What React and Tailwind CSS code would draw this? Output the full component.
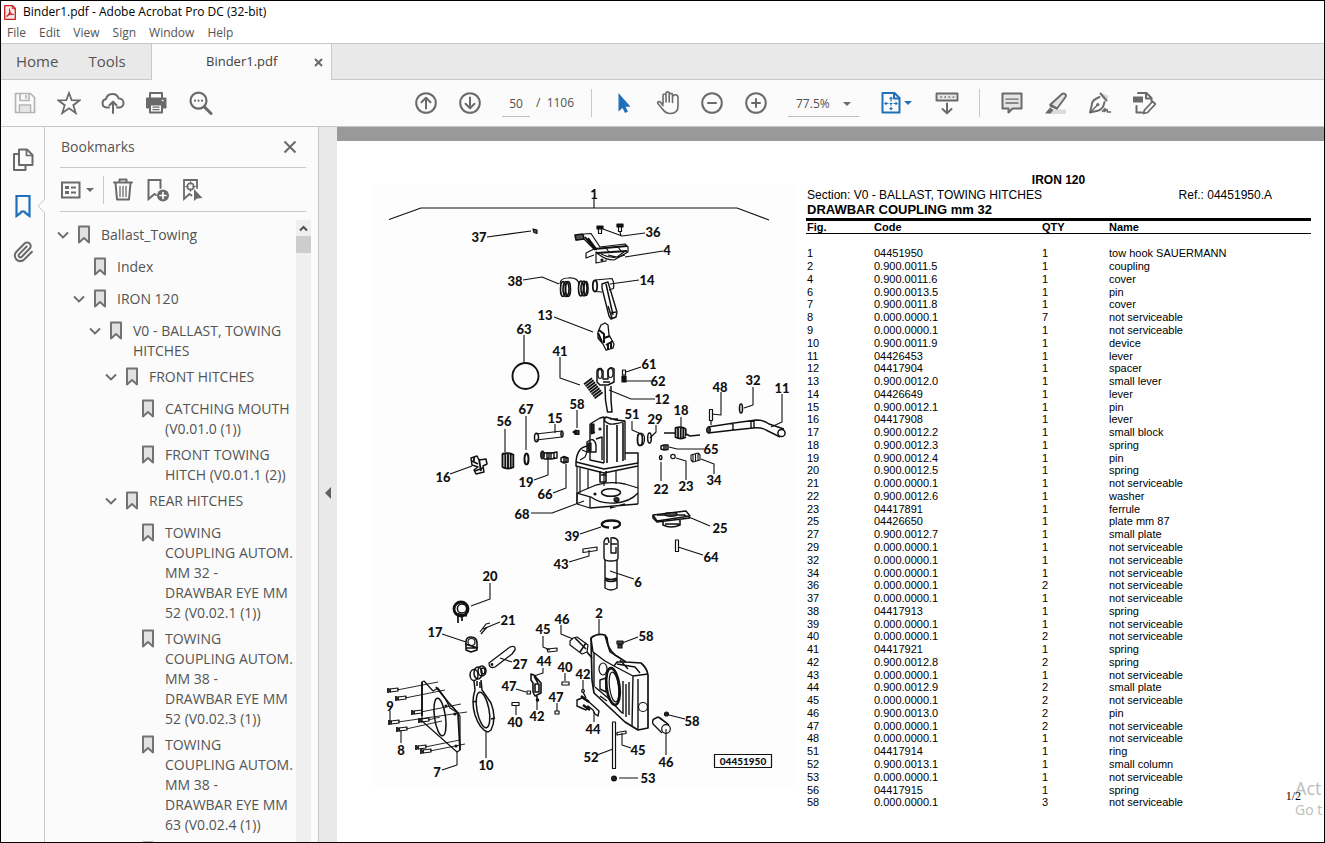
import React, { useState } from 'react';

const bookmarks = [
    { level: 0, open: true, text: 'Ballast_Towing' },
    { level: 1, text: 'Index' },
    { level: 1, open: true, text: 'IRON 120' },
    { level: 2, open: true, text: 'V0 - BALLAST, TOWING\nHITCHES' },
    { level: 3, open: true, text: 'FRONT HITCHES' },
    { level: 4, text: 'CATCHING MOUTH\n(V0.01.0 (1))' },
    { level: 4, text: 'FRONT TOWING\nHITCH (V0.01.1 (2))' },
    { level: 3, open: true, text: 'REAR HITCHES' },
    { level: 4, text: 'TOWING\nCOUPLING AUTOM.\nMM 32 -\nDRAWBAR EYE MM\n52 (V0.02.1 (1))' },
    { level: 4, text: 'TOWING\nCOUPLING AUTOM.\nMM 38 -\nDRAWBAR EYE MM\n52 (V0.02.3 (1))' },
    { level: 4, text: 'TOWING\nCOUPLING AUTOM.\nMM 38 -\nDRAWBAR EYE MM\n63 (V0.02.4 (1))' },
    { level: 4, text: '' },
];

const indent = ['pl-3', 'pl-7', 'pl-11', 'pl-15', 'pl-19'];

const parts = [
    ['1', '04451950', '1', 'tow hook SAUERMANN'],
    ['2', '0.900.0011.5', '1', 'coupling'],
    ['4', '0.900.0011.6', '1', 'cover'],
    ['6', '0.900.0013.5', '1', 'pin'],
    ['7', '0.900.0011.8', '1', 'cover'],
    ['8', '0.000.0000.1', '7', 'not serviceable'],
    ['9', '0.000.0000.1', '1', 'not serviceable'],
    ['10', '0.900.0011.9', '1', 'device'],
    ['11', '04426453', '1', 'lever'],
    ['12', '04417904', '1', 'spacer'],
    ['13', '0.900.0012.0', '1', 'small lever'],
    ['14', '04426649', '1', 'lever'],
    ['15', '0.900.0012.1', '1', 'pin'],
    ['16', '04417908', '1', 'lever'],
    ['17', '0.900.0012.2', '1', 'small block'],
    ['18', '0.900.0012.3', '1', 'spring'],
    ['19', '0.900.0012.4', '1', 'pin'],
    ['20', '0.900.0012.5', '1', 'spring'],
    ['21', '0.000.0000.1', '1', 'not serviceable'],
    ['22', '0.900.0012.6', '1', 'washer'],
    ['23', '04417891', '1', 'ferrule'],
    ['25', '04426650', '1', 'plate mm 87'],
    ['27', '0.900.0012.7', '1', 'small plate'],
    ['29', '0.000.0000.1', '1', 'not serviceable'],
    ['32', '0.000.0000.1', '1', 'not serviceable'],
    ['34', '0.000.0000.1', '1', 'not serviceable'],
    ['36', '0.000.0000.1', '2', 'not serviceable'],
    ['37', '0.000.0000.1', '1', 'not serviceable'],
    ['38', '04417913', '1', 'spring'],
    ['39', '0.000.0000.1', '1', 'not serviceable'],
    ['40', '0.000.0000.1', '2', 'not serviceable'],
    ['41', '04417921', '1', 'spring'],
    ['42', '0.900.0012.8', '2', 'spring'],
    ['43', '0.000.0000.1', '1', 'not serviceable'],
    ['44', '0.900.0012.9', '2', 'small plate'],
    ['45', '0.000.0000.1', '2', 'not serviceable'],
    ['46', '0.900.0013.0', '2', 'pin'],
    ['47', '0.000.0000.1', '2', 'not serviceable'],
    ['48', '0.000.0000.1', '1', 'not serviceable'],
    ['51', '04417914', '1', 'ring'],
    ['52', '0.900.0013.1', '1', 'small column'],
    ['53', '0.000.0000.1', '1', 'not serviceable'],
    ['56', '04417915', '1', 'spring'],
    ['58', '0.000.0000.1', '3', 'not serviceable'],
];

// callout number, x, y
const callouts = [
    ['1', 594, 194], ['37', 479, 237], ['36', 653, 232], ['4', 667, 250], ['38', 515, 281],
    ['14', 647, 280], ['13', 545, 315], ['63', 524, 329], ['41', 560, 351], ['61', 649, 364],
    ['62', 658, 381], ['12', 662, 399], ['48', 720, 387], ['32', 753, 380], ['11', 782, 388],
    ['58', 577, 404], ['67', 526, 409], ['56', 504, 421], ['15', 555, 418], ['51', 632, 414],
    ['29', 655, 419], ['18', 681, 410], ['65', 711, 449], ['34', 714, 480], ['23', 686, 486],
    ['22', 661, 489], ['66', 545, 494], ['19', 526, 482], ['16', 443, 477], ['68', 522, 514],
    ['39', 572, 536], ['25', 720, 528], ['43', 561, 564], ['64', 711, 557], ['6', 638, 582],
    ['20', 490, 576], ['21', 508, 620], ['17', 435, 632], ['46', 562, 619], ['45', 543, 629],
    ['2', 599, 613], ['58', 646, 636], ['27', 520, 664], ['44', 544, 661], ['40', 565, 667],
    ['42', 583, 674], ['47', 509, 686], ['47', 556, 697], ['42', 537, 716], ['40', 515, 722],
    ['44', 593, 729], ['9', 390, 706], ['8', 401, 750], ['7', 437, 772], ['10', 486, 765],
    ['52', 591, 757], ['45', 638, 750], ['58', 692, 721], ['46', 666, 762], ['53', 648, 778],
];

const leaders = [
    'M389 219.5L421 208H737L769 220M594 199V208M487 237L531 231M645 233L622 236L603 229M620 232L621 236',
    'M663 251L625 257M523 280L542 277L559 284M639 280L610 284M554 317L593 332M524 335V362',
    'M560 357V378L580 385M641 367L626 372M651 381H626M655 399H631L609 390M721 392V415L712 414',
    'M753 387V405L744 408M782 394V422L771 427M577 410V428M526 416V450M505 429V452M555 424V433',
    'M632 421V430L639 433M656 425V432L650 438M681 417V428M704 449H677L669 447M714 474V464L701 459',
    'M686 480V461L676 458M661 481V462M553 493L566 488V464M534 480L548 475V457M450 474L472 466',
    'M531 513H552L584 501M580 534L601 527M710 526L684 515M569 562L589 556V550M703 555L678 547',
    'M634 579L610 571M490 583V599L471 606M500 622L483 629M442 634L466 642M561 625V634L573 639',
    'M543 636V647L550 650M599 619V635M638 637L622 643M512 662L500 658M543 668V673L534 676M565 673V681',
    'M583 680V690M516 689L526 692M557 703V711M537 710V700M516 715V706M594 722V712M390 711V722',
    'M401 743V730M442 770L457 765V751M486 758V731M597 755L613 749M631 748L622 745V733',
    'M685 719L669 715M666 755V729M638 778H619',
].join('');

// bolts of the cover plate: head x, head y, end of the centre line
const bolts = [
    [388, 690, 438, 682], [396, 698, 445, 690], [412, 712, 461, 704], [389, 722, 467, 712],
    [419, 720, 440, 717], [397, 729, 442, 721], [416, 747, 460, 740], [421, 751, 465, 744],
];

const Icon = ({ children, size = 24, className = '' }) => (
    <svg
        width={size}
        height={size}
        viewBox="0 0 24 24"
        fill="none"
        stroke="currentColor"
        strokeWidth="2"
        strokeLinecap="round"
        strokeLinejoin="round"
        className={`shrink-0 ${className}`}
        aria-hidden="true"
    >
        {children}
    </svg>
);

const ToolButton = ({ label, className = '', children }) => (
    <button type="button" aria-label={label} className={`w-11 h-11 shrink-0 flex items-center justify-center ${className}`}>
        <Icon>{children}</Icon>
    </button>
);

const Caret = ({ className = '' }) => (
    <svg width="8" height="4" viewBox="0 0 8 4" className={`shrink-0 ${className}`} aria-hidden="true">
        <path d="M0 0H8L4 4Z" fill="currentColor" />
    </svg>
);

const BookmarkGlyph = () => (
    <svg width="12" height="19" viewBox="0 0 12 19" className="shrink-0" aria-hidden="true">
        <path d="M1 1.5H11V17.5L6 13L1 17.5Z" fill="#e1e1e1" stroke="#737373" strokeWidth="2" strokeLinejoin="round" />
    </svg>
);

const Toolbar = () => {
    const [page, setPage] = useState('50');

    return (
        <div className="h-[47px] shrink-0 pl-[2px] flex items-center bg-[#fbfbfb] border-b border-[#c8c8c8] text-[#6a6a6a] overflow-hidden">
            <ToolButton label="Save" className="text-[#b4b4b4]">
                <path d="M2.5 2.5H17.5L21.5 6.5V21.5H2.5Z" strokeWidth="1.7" />
                <path d="M7 3V9.5H16V3M6.5 21.5V14H17.5V21.5" strokeWidth="1.7" />
                <path d="M7.5 15H16.5V21H7.5Z" fill="#e4e4e4" stroke="none" />
                <path d="M13 4.5V7" strokeWidth="1.7" />
            </ToolButton>
            <ToolButton label="Add to favourites">
                <path d="M12 2L14.7 9.2L22.5 9.4L16.3 14.2L18.7 22L12 17.3L5.3 22L7.7 14.2L1.5 9.4L9.3 9.2Z" strokeWidth="1.8" strokeLinejoin="miter" />
            </ToolButton>
            <ToolButton label="Upload to cloud">
                <path d="M8 16.5H5.5A4.3 4.3 0 0 1 5 8A6.6 6.6 0 0 1 17.7 7.5A4.5 4.5 0 0 1 18.3 16.5H16" />
                <path d="M12 22V11M8.5 14.3L12 10.8L15.5 14.3" />
            </ToolButton>
            <ToolButton label="Print">
                <path d="M5 7V2H17V7" />
                <path d="M2 7.5H20.5V16.5H17V13.5H5V16.5H2Z" fill="currentColor" />
                <path d="M5 13.5H17V21.5H5Z" fill="#fbfbfb" />
                <path d="M8 16.2H14M8 18.7H14" strokeWidth="1.3" />
                <path d="M17.5 9.5H18" stroke="#fbfbfb" strokeWidth="1.5" />
            </ToolButton>
            <ToolButton label="Find text">
                <circle cx="9.5" cy="9.7" r="8" strokeWidth="2.2" />
                <path d="M15.5 16L22 22.5" strokeWidth="3" />
                <path d="M6 9.7H6.01M9.5 9.7H9.51M13 9.7H13.01" strokeWidth="2.2" />
            </ToolButton>

            <ToolButton label="Previous page" className="ml-[181px]">
                <circle cx="12" cy="12" r="9.8" />
                <path d="M12 17.5V7M7.5 11.2L12 6.8L16.5 11.2" />
            </ToolButton>
            <ToolButton label="Next page">
                <circle cx="12" cy="12" r="9.8" />
                <path d="M12 6.5V17M7.5 12.8L12 17.2L16.5 12.8" />
            </ToolButton>
            <input
                type="text"
                aria-label="Page number"
                value={page}
                onChange={(e) => setPage(e.target.value)}
                className="ml-[10px] mt-[2px] w-7 h-[26px] shrink-0 text-center text-xs text-[#505050] border-b border-[#bdbdbd] outline-none"
            />
            <span className="ml-[6px] w-9 shrink-0 text-xs text-[#505050] whitespace-pre">/  1106</span>
            <div className="ml-[19px] w-px h-7 shrink-0 bg-[#c8c8c8]"></div>

            <ToolButton label="Select tool" className="ml-[10px] text-[#1f6fba]">
                <path d="M6.5 2V20.5L10.5 17L13 22L16 20.5L13.5 15.7H18.5Z" fill="currentColor" stroke="none" />
            </ToolButton>
            <ToolButton label="Hand tool">
                <path d="M7 13V4.5A1.5 1.5 0 0 1 10 4.5V11M10 4V2.5A1.5 1.5 0 0 1 13.2 2.5V11M13.2 4A1.6 1.6 0 0 1 16.5 4V11.5M16.5 6.5A1.6 1.6 0 0 1 22 6.5V15C22 20 19 22.5 14.5 22.5C11 22.5 8.5 21 6.5 18L1.8 12.5C1 10.8 3 10 4.3 11L7 14.5" strokeWidth="1.6" />
            </ToolButton>
            <ToolButton label="Zoom out">
                <circle cx="12" cy="12" r="9.8" />
                <path d="M8 12H16" />
            </ToolButton>
            <ToolButton label="Zoom in">
                <circle cx="12" cy="12" r="9.8" />
                <path d="M8 12H16M12 8V16" />
            </ToolButton>
            <div className="ml-[10px] mt-[2px] w-[71px] h-[26px] shrink-0 grid items-center border-b border-[#bdbdbd]">
                <select aria-label="Zoom level" className="col-start-1 row-start-1 w-full pl-2 appearance-none text-xs text-[#505050] outline-none">
                    <option>77.5%</option>
                </select>
                <Caret className="col-start-1 row-start-1 justify-self-end mr-2 pointer-events-none" />
            </div>

            <button type="button" aria-label="Fit page" className="ml-[10px] w-[54px] h-11 shrink-0 flex items-center pl-[10px] text-[#1f6fba]">
                <Icon>
                    <path d="M3.5 2H15.5L20.5 7V21.5H3.5Z" />
                    <path d="M15 2.5V7.5H20" />
                    <path d="M12 8V17M7 12.5H17" strokeWidth="1.2" strokeDasharray="2 2" />
                    <path d="M12 5.5L14 8H10ZM12 19.5L14 17H10ZM5 12.5L7.5 10.5V14.5ZM19 12.5L16.5 10.5V14.5Z" fill="currentColor" stroke="none" />
                </Icon>
                <Caret className="ml-px" />
            </button>
            <ToolButton label="Page display" className="ml-[2px]">
                <path d="M1.5 2.5H22.5V9.5H1.5Z" fill="#e4e4e4" strokeWidth="1.9" />
                <path d="M6 6H18.5" strokeWidth="1.7" strokeDasharray="0.2 3.9" />
                <path d="M12 12.5V22M7.5 18L12 22.2L16.5 18" />
            </ToolButton>
            <div className="ml-[10px] w-px h-7 shrink-0 bg-[#c8c8c8]"></div>
            <ToolButton label="Add comment" className="ml-[10px]">
                <path d="M2.5 2.5H21.5V17.5H12.5L8.5 21.5V17.5H2.5Z" fill="#e4e4e4" />
                <path d="M6 8.2H18M6 12H18" strokeWidth="1.3" />
            </ToolButton>
            <ToolButton label="Highlight text">
                <path d="M8 18.5H22V23H4Z" fill="#dcdcdc" stroke="none" />
                <path d="M18 3C20 1.5 23 3.5 21.5 6L13 17.5L6.5 15V13.5Z" fill="#e4e4e4" strokeWidth="1.9" />
                <path d="M6.5 13.5L13 17.5" />
                <path d="M6 16.5L1 22.5H6.5L9.5 19Z" fill="currentColor" stroke="none" />
            </ToolButton>
            <ToolButton label="Sign document">
                <path d="M14 2L21 5L18.5 9Z" fill="#d8d8d8" stroke="none" />
                <path d="M12.5 2.5L18.5 9.5" />
                <path d="M11.5 6C6.5 8 4 10 4 13L2 21.5L10.5 19.5C14 18.5 15.5 16.5 16.5 11" strokeWidth="1.9" />
                <path d="M2.5 21L9 14.5" strokeWidth="1.6" />
                <circle cx="9.8" cy="13.6" r="1.6" fill="currentColor" stroke="none" />
                <path d="M14.5 20.5L17 17.5L16.5 20.5L19 18.5L19.5 21H22.5" strokeWidth="1.6" />
            </ToolButton>
            <ToolButton label="Edit PDF">
                <path d="M6 2H14.5L19.5 7V10M14 2.5V7.5H19" />
                <path d="M1 5.5H11V11.5H1Z" fill="currentColor" stroke="none" />
                <path d="M4.5 15V21.5H10" />
                <path d="M20.5 10.5L23.5 13L15.5 21.5L11.5 22.5L12.5 19Z" fill="#fbfbfb" strokeWidth="1.8" />
            </ToolButton>
        </div>
    );
};

const Sidebar = () => (
    <div className="w-11 shrink-0 bg-[#fbfbfb] border-r border-[#c8c8c8] text-[#6a6a6a] flex flex-col">
        <button type="button" aria-label="Page thumbnails" className="h-[46px] mt-[10px] flex items-center justify-center">
            <Icon>
                <path d="M8 1.5H16L21.5 7V17H8Z" fill="#fbfbfb" />
                <path d="M15.5 2V7.5H21" strokeWidth="1.7" />
                <path d="M8 6H3V22H14.5V17" />
            </Icon>
        </button>
        <div className="h-[46px] flex items-center">
            <button type="button" aria-label="Bookmarks" className="flex-1 pl-[7px] flex justify-center text-[#1f6fba]">
                <Icon>
                    <path d="M5.5 2H18.5V22L14.5 19A2.7 2.7 0 0 0 9.500 19L5.5 22Z" strokeWidth="2.2" strokeLinejoin="miter" />
                </Icon>
            </button>
            <svg width="8" height="14" viewBox="0 0 8 14" className="-mr-px shrink-0 relative" aria-hidden="true">
                <path d="M8 0L1 7L8 14" fill="#fbfbfb" stroke="#c8c8c8" />
            </svg>
        </div>
        <button type="button" aria-label="Attachments" className="h-[46px] flex items-center justify-center">
            <Icon size={22}>
                <path d="M16 6L7.6 14.6A2 2 0 0 0 10.4 17.4L18.8 8.8A4 4 0 1 0 13.2 3.2L4.8 11.7A6 6 0 1 0 13.3 20.2L21.700 11.700" strokeWidth="2.2" />
            </Icon>
        </button>
    </div>
);

const BookmarksPanel = () => (
    <div className="w-[274px] shrink-0 bg-[#fbfbfb] border-r border-[#c8c8c8] flex flex-col min-h-0 text-[#545454]">
        <div className="ml-[15px] mr-3 h-[41px] shrink-0 border-b border-[#c8c8c8] flex items-center justify-between">
            <h2 className="pl-px text-sm">Bookmarks</h2>
            <button type="button" aria-label="Close panel" className="mr-[9px] text-[#6a6a6a]">
                <svg width="14" height="14" viewBox="0 0 14 14" aria-hidden="true">
                    <path d="M1.5 1.5L12.5 12.5M12.5 1.5L1.5 12.5" stroke="currentColor" strokeWidth="2" />
                </svg>
            </button>
        </div>
        <div className="ml-[15px] mr-3 h-11 shrink-0 border-b border-[#c8c8c8] flex items-center text-[#6a6a6a]">
            <button type="button" aria-label="Options" className="flex items-center gap-[5px]">
                <svg width="21" height="18" viewBox="0 0 21 18" aria-hidden="true">
                    <rect x="2" y="1.5" width="17.500" height="15" fill="none" stroke="currentColor" strokeWidth="2" />
                    <path d="M5 5H9V8H5ZM5 10H9V13H5Z" fill="currentColor" />
                    <path d="M11 6.5H16M11 11.5H16" stroke="currentColor" strokeWidth="2" />
                </svg>
                <Caret />
            </button>
            <div className="ml-[9px] w-px h-7 bg-[#c8c8c8]"></div>
            <button type="button" aria-label="Delete bookmark" className="ml-[7px]">
                <Icon>
                    <path d="M3 4.5H21M8.5 4V1.5H15.5V4" />
                    <path d="M4.5 5L6 21.5H18L19.5 5" />
                    <path d="M9 8.5V18.5M12 8.5V18.5M15 8.5V18.5" strokeWidth="1.3" />
                </Icon>
            </button>
            <button type="button" aria-label="New bookmark" className="ml-[11px]">
                <Icon>
                    <path d="M10 17L8.5 16L2.5 21V2H14.5V10" strokeLinejoin="miter" />
                    <circle cx="17" cy="17.5" r="6" fill="currentColor" stroke="none" />
                    <path d="M17 14.5V20.5M14 17.5H20" stroke="#fff" strokeWidth="1.7" />
                </Icon>
            </button>
            <button type="button" aria-label="Find current bookmark" className="ml-[10px]">
                <Icon>
                    <path d="M11.5 17.5L9.5 16L4 21V2H17V10" strokeLinejoin="miter" strokeWidth="1.8" />
                    <circle cx="10.5" cy="8.5" r="3.2" strokeWidth="1.5" />
                    <path d="M10.5 4V6M10.5 11V13M6 8.5H8M13 8.5H15" strokeWidth="1.5" />
                    <path d="M14 11V23L17 20.5L22.5 20Z" fill="currentColor" stroke="none" />
                </Icon>
            </button>
        </div>
        <div className="flex-1 min-h-0 flex pt-2">
            <ul className="flex-1 min-w-0 pt-[5px] overflow-hidden">
                {bookmarks.map((b, i) => (
                    <li key={i} className={`min-h-8 pb-[6px] flex items-start ${indent[b.level]}`}>
                        <span className="w-[21px] h-5 shrink-0 flex items-center">
                            {b.open && (
                                <svg width="12" height="8" viewBox="0 0 12 8" aria-hidden="true">
                                    <path d="M1 1.5L6 6.5L11 1.5" fill="none" stroke="#6a6a6a" strokeWidth="1.8" />
                                </svg>
                            )}
                        </span>
                        <BookmarkGlyph />
                        <a href="#" className="ml-[11px] text-sm leading-5 whitespace-pre">{b.text}</a>
                    </li>
                ))}
            </ul>
            <div className="w-[15px] mr-[7px] shrink-0 bg-[#efefef] flex flex-col items-center">
                <svg width="15" height="16" viewBox="0 0 15 16" className="shrink-0" aria-hidden="true">
                    <path d="M4 10.5L7.5 7L11 10.5" fill="none" stroke="#505050" strokeWidth="2" />
                </svg>
                <div className="w-full h-[17px] bg-[#cdcdcd]"></div>
            </div>
        </div>
    </div>
);

const Diagram = () => (
    <svg width="430" height="610" viewBox="370 180 430 610" className="shrink-0" fill="none" stroke="#111" strokeWidth="1.2" strokeLinejoin="round" role="img" aria-label="Exploded view of drawbar coupling">
        <rect x="372" y="184" width="424" height="604" fill="#fdfdfd" stroke="none" />
        <path d={leaders} strokeWidth="1.1" />

        {/* 37, 36 screws */}
        <path d="M533 229L537 230V233.500L534 232.500Z" fill="#555" />
        <path d="M597 226H603V229H597ZM617 224H623V227H617Z" fill="#111" />
        <path d="M598.5 229V233.5H601.5V229M618.5 227V231.5H621.5V227" />

        {/* 4 cover */}
        <path d="M584 234L591 233.500L600 247L625 244L628 247V252L614 260Q604 260 596 252V263L606 261V258M576 240L584 239L594 249L586 253V258L594 255" />
        <path d="M575 235L583 234L584 239L576 240Z" fill="#555" strokeWidth="1.6" />
        <path d="M585 237L595 250M588 238L597 250M594 249L627 246M597 253L627 251" strokeWidth="1.8" />
        <path d="M606 248L609 252M618 247L621 251M601 254Q612 260 625 255M608 255L617 257L624 252" />
        <circle cx="602" cy="260" r="1" fill="#111" />

        {/* 38 spring */}
        <path d="M560 284Q560 278 568 278Q578 277 579 284" />
        <g strokeWidth="1.6">
            <ellipse cx="563" cy="289" rx="2.5" ry="7.5" />
            <ellipse cx="566" cy="289" rx="3" ry="7.5" />
            <ellipse cx="568" cy="289" rx="2.5" ry="7.5" />
            <ellipse cx="581" cy="288.5" rx="2.5" ry="7.5" />
            <ellipse cx="584" cy="288.5" rx="3" ry="7.5" />
            <ellipse cx="586" cy="288.5" rx="2" ry="7" />
        </g>

        {/* 14 lever */}
        <ellipse cx="595" cy="286" rx="2.2" ry="5.5" strokeWidth="1.8" />
        <path d="M595 280L612 278.500Q614.500 283 613.500 288.500L609 290M595 291.5L602 292" />
        <path d="M602 284L608 282L617 312L616 317L611 319L609 316L602 288Z" strokeWidth="1.4" />
        <path d="M606 284L613 315M608 306L612 318M616 312L611 313" strokeWidth="1.5" />

        {/* 13 small lever */}
        <path d="M601 325L605 323L608 325L609 335L614 344L613 348L606 350L603 344L598 338V332Z" strokeWidth="1.3" fill="#fff" />
        <path d="M599 330L604 334V343M604 338L610 336M606 345L613 341M608 349V344M598 333L602 342M611 348V343" strokeWidth="2" />

        {/* 63 ring */}
        <circle cx="525.5" cy="376" r="13" strokeWidth="1.9" />

        {/* 41 spring */}
        <path d="M587.500 380.500L599.500 396.500" strokeWidth="10" strokeDasharray="1.900 0.600" />

        {/* 61, 62 */}
        <path d="M622.5 370H625.5V375H622.5Z" />
        <path d="M622 376H626V382H622Z" fill="#111" />

        {/* 12 spacer */}
        <path d="M597 372Q597 368 601 368.5L603 371V379H608V370Q611 366 614 369V382L608 385H600L597 382Z" strokeWidth="1.5" />
        <ellipse cx="600" cy="374" rx="2" ry="4.5" />
        <ellipse cx="610.5" cy="373" rx="2.5" ry="4.5" />
        <path d="M603 382H610M605 386L605.5 400L607.5 412H612L611 400V386" strokeWidth="1.5" />

        {/* 58, 15, 67, 56 */}
        <path d="M573 432L576 430V434.5ZM575 430.5H579V434.5H575Z" fill="#333" />
        <path d="M536 434L562 431V437L536 440" />
        <ellipse cx="536.5" cy="437.5" rx="2" ry="4.2" strokeWidth="1.5" />
        <ellipse cx="562" cy="434" rx="1.2" ry="3" />
        <ellipse cx="526.5" cy="459" rx="2" ry="5.5" strokeWidth="2" />
        <path d="M502.5 454V467M505.3 453V468M508 453V468.500M510.700 453.500V468M513.300 454V467M502 454Q508 452 514 455M502 467Q508 470 514 467" strokeWidth="1.9" />

        {/* 16 lever */}
        <path d="M471 458L477 456L479 460L486 459L487 464L483 466L484 472L476 474L474 470L478 467L472 465Z" strokeWidth="1.5" />
        <path d="M472 461L478 464M479 459L481 471M475 471L483 468M474 457V461" strokeWidth="1.8" />

        {/* 19, 66 */}
        <ellipse cx="542.5" cy="455" rx="1.800" ry="4" fill="#333" />
        <path d="M544 453H552L557 452V458L551 459H544M547 452V459M549 452V459M551 452V459M554 452V459" strokeWidth="1.4" />
        <path d="M561 458L564 456.500L568 458V462L564 463L561 461.500ZM564 457V463M566 458V462" strokeWidth="1.5" />

        {/* 68 body */}
        <path d="M590 424L600 418L604 417V463M590 424V460L604 463M604 420Q608 425 614 424Q622 423 625 421V460M604 420L606 417L616 420L625 421M610 419H618" strokeWidth="1.4" />
        <path d="M607 425V463M617 425V462M623 423V461" strokeWidth="1.6" />
        <path d="M591 434L595 432M596 439L602 437V460M587 442Q594 436 596 445V452H587Z" strokeWidth="1.4" />
        <path d="M591 424H594V433H591ZM588 443H591V451H588Z" fill="#222" />
        <circle cx="600" cy="429" r="1" />
        <path d="M588 446Q577 447 576 462L604 469L638 463V453H625M576 462V466L604 473L638 466" strokeWidth="1.5" />
        <path d="M577 466V504M580 468V493M588 470V489M604 473V486M616 471V484M638 463V504M582 450L587 452L585 457L580 460" />
        <path d="M600 471V482H606V471M601 475H606" strokeWidth="1.6" />
        <path d="M577 493L596 485Q610 481 625 484L638 488M577 493L591 497Q600 504 615 503Q630 502 638 493M577 504L590 508L638 504M590 497V508M577 493V504M610 508L625 504" strokeWidth="1.3" />
        <ellipse cx="611" cy="492.5" rx="9.5" ry="3.8" strokeWidth="1.6" />
        <ellipse cx="616.5" cy="499.5" rx="2.5" ry="2" fill="#333" />
        <circle cx="595" cy="494" r="1" fill="#111" />

        {/* 51, 29, 18 */}
        <ellipse cx="640" cy="439.5" rx="2.5" ry="6" strokeWidth="1.8" />
        <path d="M641 433Q645 434 644.5 440Q644 445 641 445.5" />
        <ellipse cx="649.5" cy="438" rx="1.8" ry="5" strokeWidth="1.5" />
        <path d="M664 433H675M686 434L690 436L700 435" strokeWidth="1.400" />
        <path d="M675.500 428V438M678 427.5V438.5M680.700 427.5V438.5M683.300 428V438M685.700 429V436M675 428Q681 426 686 429M675 437Q681 440 686 437" strokeWidth="1.8" />

        {/* 48, 32, 11 */}
        <path d="M709.5 409.5H712.5V420.5H709.5ZM711 421V425" />
        <ellipse cx="741" cy="408.5" rx="1.5" ry="4.5" strokeWidth="1.6" />
        <path d="M708 427L734 423L756 420Q764 420 769 424L784 429M708 433L734 430L753 428Q761 427 766 430L780 437M733 423V430M751 421V428M754 420V428" strokeWidth="1.4" />
        <ellipse cx="708.5" cy="430" rx="1.8" ry="3" fill="#444" />
        <circle cx="781.5" cy="433" r="3.6" strokeWidth="1.5" />

        {/* 65, 22, 23, 34 */}
        <path d="M661 446L664 445H668V449.500L664 450L661 449ZM664 445V450M666 445V450" strokeWidth="1.5" />
        <ellipse cx="660.7" cy="457.5" rx="1.2" ry="2" strokeWidth="1.4" />
        <circle cx="673" cy="456.5" r="2.2" />
        <path d="M691 455L698 453L700 455V460L693 462L691 460ZM693 455V461M695.500 454V461M698 454V460" strokeWidth="1.100" />

        {/* 39, 25, 43, 64, 6 */}
        <path d="M609 527.500Q601 527 602 523.500Q604 520.500 611 520.500Q620 520.500 620 524Q620 527 613 528" strokeWidth="2.3" />
        <path d="M653 515L686 511L690 516L657 521Z" strokeWidth="1.4" />
        <path d="M653 515V518L657 522L690 518M657 515H685M663 522V525Q671 529 680 525V520M665 524H679" strokeWidth="1.6" />
        <ellipse cx="671" cy="514.5" rx="6" ry="1.7" strokeWidth="1.4" />
        <path d="M583 549L597 547V550.5L583 552.5Z" />
        <path d="M675.5 540H678.5V551.5H675.5Z" />
        <path d="M604 543V558Q604 561 611 561Q618 561 618 558V541Q616 537 611 538V553H616V547M604 543Q604 538 608 538L609 543M605 544H608M611 544H617" strokeWidth="1.4" />
        <path d="M605 560V588Q611 592 617 588V560M605 578Q611 581 617 578M605 580Q611 583 617 580" strokeWidth="1.4" />

        {/* 20, 21, 17, 27 */}
        <circle cx="461" cy="609" r="7" strokeWidth="2.8" />
        <circle cx="462" cy="608.5" r="4.6" strokeWidth="1.5" />
        <path d="M458 616V623M462 616V621M455 613L467 616" strokeWidth="1.7" />
        <path d="M480 632L486 624L490 623M481 634L487 627" />
        <path d="M466 642Q466 637 471 637Q477 637 477 643V650L471 652L466 650Z" strokeWidth="1.600" />
        <circle cx="471.5" cy="642" r="3.500" />
        <path d="M465 644L478 648M466 648H476" strokeWidth="1.6" />
        <path d="M489 663L510 647Q516 645 515 650L512 654L495 667Q489 669 489 663Z" strokeWidth="1.3" />
        <circle cx="492" cy="664.5" r="0.8" fill="#111" />

        {/* 10 device */}
        <g strokeWidth="1.5">
            <ellipse cx="474" cy="675" rx="4" ry="5.5" />
            <ellipse cx="478" cy="673" rx="4" ry="6" />
            <ellipse cx="482" cy="671" rx="4" ry="5" />
            <ellipse cx="483" cy="671" rx="2" ry="3" />
            <path d="M474 681L475 690Q471 702 475 715Q480 730 488 732L491 730Q497 718 491 703L482 690L481 680" />
            <ellipse cx="483" cy="710" rx="6" ry="18" transform="rotate(-11 483 710)" />
            <path d="M477 681V686M480 682V688M473 702L477 701M491 719L495 718" />
        </g>

        {/* 7 cover plate */}
        <path d="M422 682L424 681L433 691L438 688L445 698L450 708L458 713L460 716V750L457 752L422 721Z" />
        <path d="M422 682V716M436 687L448 702L458 713L460 750" strokeWidth="1.800" />
        <ellipse cx="440" cy="717" rx="5.5" ry="19" transform="rotate(-8 440 717)" strokeWidth="1.5" />
        <circle cx="446" cy="706" r="1" fill="#111" />
        <circle cx="455" cy="714" r="1" fill="#111" />
        <circle cx="456" cy="746" r="1" fill="#111" />
        {bolts.map(([x, y, x2, y2]) => (
            <g key={`${x}-${y}`}>
                <path d={`M${x + 9} ${y}L${x2} ${y2}`} strokeWidth="0.9" />
                <path d={`M${x} ${y - 2}V${y + 3}M${x + 2} ${y - 1.5}V${y + 2.5}`} strokeWidth="1.8" />
                <path d={`M${x + 2} ${y - 1}L${x + 10} ${y - 2}V${y + 1}L${x + 2} ${y + 2}`} />
            </g>
        ))}

        {/* 45, 44, 47, 42, 40 */}
        <path d="M547 649L557 648V651L548 652ZM562 682H569V685H562ZM512 702.5H519V705.5H512ZM555 711H559V714H555ZM527 691H530.5V694H527Z" />
        <path d="M531 674L534 675L541 683V693L535 696L533 692V683L531 680ZM534 676L538 683M535 684V692H539V684ZM537 696V699" strokeWidth="1.6" />
        <circle cx="537.5" cy="700" r="1.2" fill="#111" />
        <path d="M577 700L582 698L589 702L599 711L598 716L595 714L593 710L588 706L586 710L577 706ZM583 692L586 698" strokeWidth="1.400" />
        <path d="M581 696L589 702M583 705L590 710" strokeWidth="2.500" />
        <circle cx="583" cy="691" r="1.4" />

        {/* 46 pins */}
        <path d="M570 641L573 638L577 637L588 645L587 652L582 654L570 645Z" strokeWidth="1.2" />
        <path d="M575 638L586 649M580 652L586 643M587 652L592 658" strokeWidth="1.6" />
        <path d="M654 719L658 717L669 725M653 724L662 733M653 724Q652 720 654 719M659 717L668 724" strokeWidth="1.4" />
        <circle cx="666" cy="729" r="4.3" />

        {/* 2 coupling housing */}
        <path d="M591 638Q597 633 605 635L607 638Q607 648 615 655L626 662L641 663Q647 668 648 675V728L638 730L625 722L594 693L592 680Z" strokeWidth="1.7" />
        <path d="M591 638L593 652L605 661L614 666L617 662H626M594 652V687M607 638L608 646M614 666L633 676L648 674M633 676L632 727M638 679V729M605 636L610 652L620 658M617 664L635 667L640 673M620 660L628 669" strokeWidth="1.4" />
        <ellipse cx="613" cy="686.5" rx="6.5" ry="18.5" transform="rotate(-7 613 686.5)" strokeWidth="2.6" />
        <ellipse cx="614" cy="687" rx="4.5" ry="15" transform="rotate(-7 614 687)" />
        <ellipse cx="603" cy="669" rx="4" ry="6" />
        <circle cx="643" cy="707" r="4.5" />
        <path d="M600 680L606 678V692L600 689ZM595 687L608 698L622 713M623 681V714M626 684V717M629 682V715M600 696L607 701" strokeWidth="1.4" />

        {/* 58, 52, 53 */}
        <path d="M617 641H623V644H617ZM618 645H622V648H618Z" fill="#444" />
        <circle cx="666.5" cy="714" r="2" fill="#222" />
        <path d="M612.5 722V768.5H615.5V722ZM617 732.5L626 731V733.5L617 735Z" />
        <circle cx="614" cy="778.5" r="2.4" fill="#222" />

        <rect x="714.5" y="754.5" width="57" height="13" />
        <g fill="#111" stroke="none" className="font-['Lato'] font-black" textAnchor="middle" fontSize="13">
            {callouts.map(([n, x, y], i) => (
                <text key={i} x={x} y={y + 5}>{n}</text>
            ))}
            <text x="743" y="765" fontSize="10">04451950</text>
        </g>
    </svg>
);

const PartsList = () => (
    <div className="flex-1 min-w-0 ml-[6px] mr-[13px] pt-8 text-black font-['Liberation_Sans',Arial,sans-serif]">
        <h1 className="text-center text-xs leading-[14px] font-bold">IRON 120</h1>
        <div className="pl-px pr-[39px] flex justify-between text-xs leading-4">
            <span>Section: V0 - BALLAST, TOWING HITCHES</span>
            <span>Ref.: 04451950.A</span>
        </div>
        <h2 className="pl-px text-[13px] leading-[14px] font-bold">DRAWBAR COUPLING mm 32</h2>
        <table className="mt-px w-full table-fixed text-left text-[11px] leading-3 border-t-3 border-black">
            <thead>
                <tr className="h-[14px] border-b border-black">
                    <th className="w-[68px] pl-px">Fig.</th>
                    <th className="w-[168px]">Code</th>
                    <th className="w-[67px]">QTY</th>
                    <th>Name</th>
                </tr>
            </thead>
        </table>
        <table className="mt-[13px] w-full h-[562px] table-fixed text-left text-[11px] leading-3" aria-label="Parts">
            <tbody>
                {parts.map(([fig, code, qty, name]) => (
                    <tr key={fig}>
                        <td className="w-[68px] pl-px">{fig}</td>
                        <td className="w-[168px]">{code}</td>
                        <td className="w-[67px]">{qty}</td>
                        <td>{name}</td>
                    </tr>
                ))}
            </tbody>
        </table>
    </div>
);

const App = () => {
    return (
        <div className="h-screen flex flex-col border border-black bg-white overflow-hidden font-['Open_Sans','Noto_Sans',sans-serif]">
            <div className="h-[22px] shrink-0 pl-[3px] flex items-center gap-[7px] text-xs text-black">
                <svg width="12" height="15" viewBox="0 0 12 15" aria-hidden="true">
                    <path d="M0.7 0.7H8.5L11.3 3.5V14.3H0.7Z" fill="#fbe9e9" stroke="#c8201f" strokeWidth="1.3" strokeLinejoin="round" />
                    <path d="M8.3 0.7V3.7H11.3" fill="none" stroke="#c8201f" />
                    <path d="M2.5 11.5C5 10 6.5 6.5 5.5 4.5C5 6.5 7 9.5 9.7 9.5C7.5 8.5 4 9.5 2.5 11.5Z" fill="none" stroke="#c8201f" strokeWidth="1.1" />
                </svg>
                <span>Binder1.pdf - Adobe Acrobat Pro DC (32-bit)</span>
            </div>
            <div className="h-5 shrink-0 pl-[6px] flex items-center gap-[13px] text-xs text-[#545454]">
                <button type="button">File</button>
                <button type="button">Edit</button>
                <button type="button">View</button>
                <button type="button">Sign</button>
                <button type="button">Window</button>
                <button type="button">Help</button>
            </div>
            <div className="h-[37px] shrink-0 flex bg-[#e9e9e9] border-t border-[#c8c8c8] text-[#545454]">
                <div className="w-[151px] shrink-0 pl-[15px] flex items-center gap-[30px] border-r border-b border-[#c8c8c8] text-[15px]">
                    <button type="button">Home</button>
                    <button type="button">Tools</button>
                </div>
                <div className="w-[179px] shrink-0 pl-[54px] pr-2 flex items-center justify-between bg-[#fbfbfb] text-[13px] text-[#404040]">
                    <button type="button">Binder1.pdf</button>
                    <button type="button" aria-label="Close tab" className="text-[#6a6a6a]">
                        <svg width="9" height="9" viewBox="0 0 9 9" aria-hidden="true">
                            <path d="M1 1L8 8M8 1L1 8" stroke="currentColor" strokeWidth="2" />
                        </svg>
                    </button>
                </div>
                <div className="flex-1 border-l border-b border-[#c8c8c8]"></div>
            </div>
            <Toolbar />
            <div className="flex-1 min-h-0 flex">
                <Sidebar />
                <BookmarksPanel />
                <button type="button" aria-label="Collapse panel" className="w-[18px] shrink-0 bg-[#e9e9e9] flex items-center justify-center">
                    <svg width="6" height="12" viewBox="0 0 6 12" className="mt-4" aria-hidden="true">
                        <path d="M6 0V12L0 6Z" fill="#606060" />
                    </svg>
                </button>
                <div className="flex-1 min-w-0 relative flex flex-col overflow-hidden">
                    <div className="h-[14px] shrink-0 bg-[#999]"></div>
                    <div className="flex-1 min-h-0 pl-[33px] flex items-start">
                        <div className="pt-[39px] shrink-0">
                            <Diagram />
                        </div>
                        <PartsList />
                    </div>
                    <div className="absolute right-0 bottom-[22px] w-[29px] overflow-hidden whitespace-nowrap text-[#bdbdbd]">
                        <div className="text-lg leading-6">Act</div>
                        <div className="text-sm leading-5">Go t</div>
                    </div>
                    <span className="absolute right-[23px] bottom-[38px] text-xs text-black font-['Liberation_Serif',serif]">1/2</span>
                </div>
            </div>
        </div>
    );
};

export default App;
